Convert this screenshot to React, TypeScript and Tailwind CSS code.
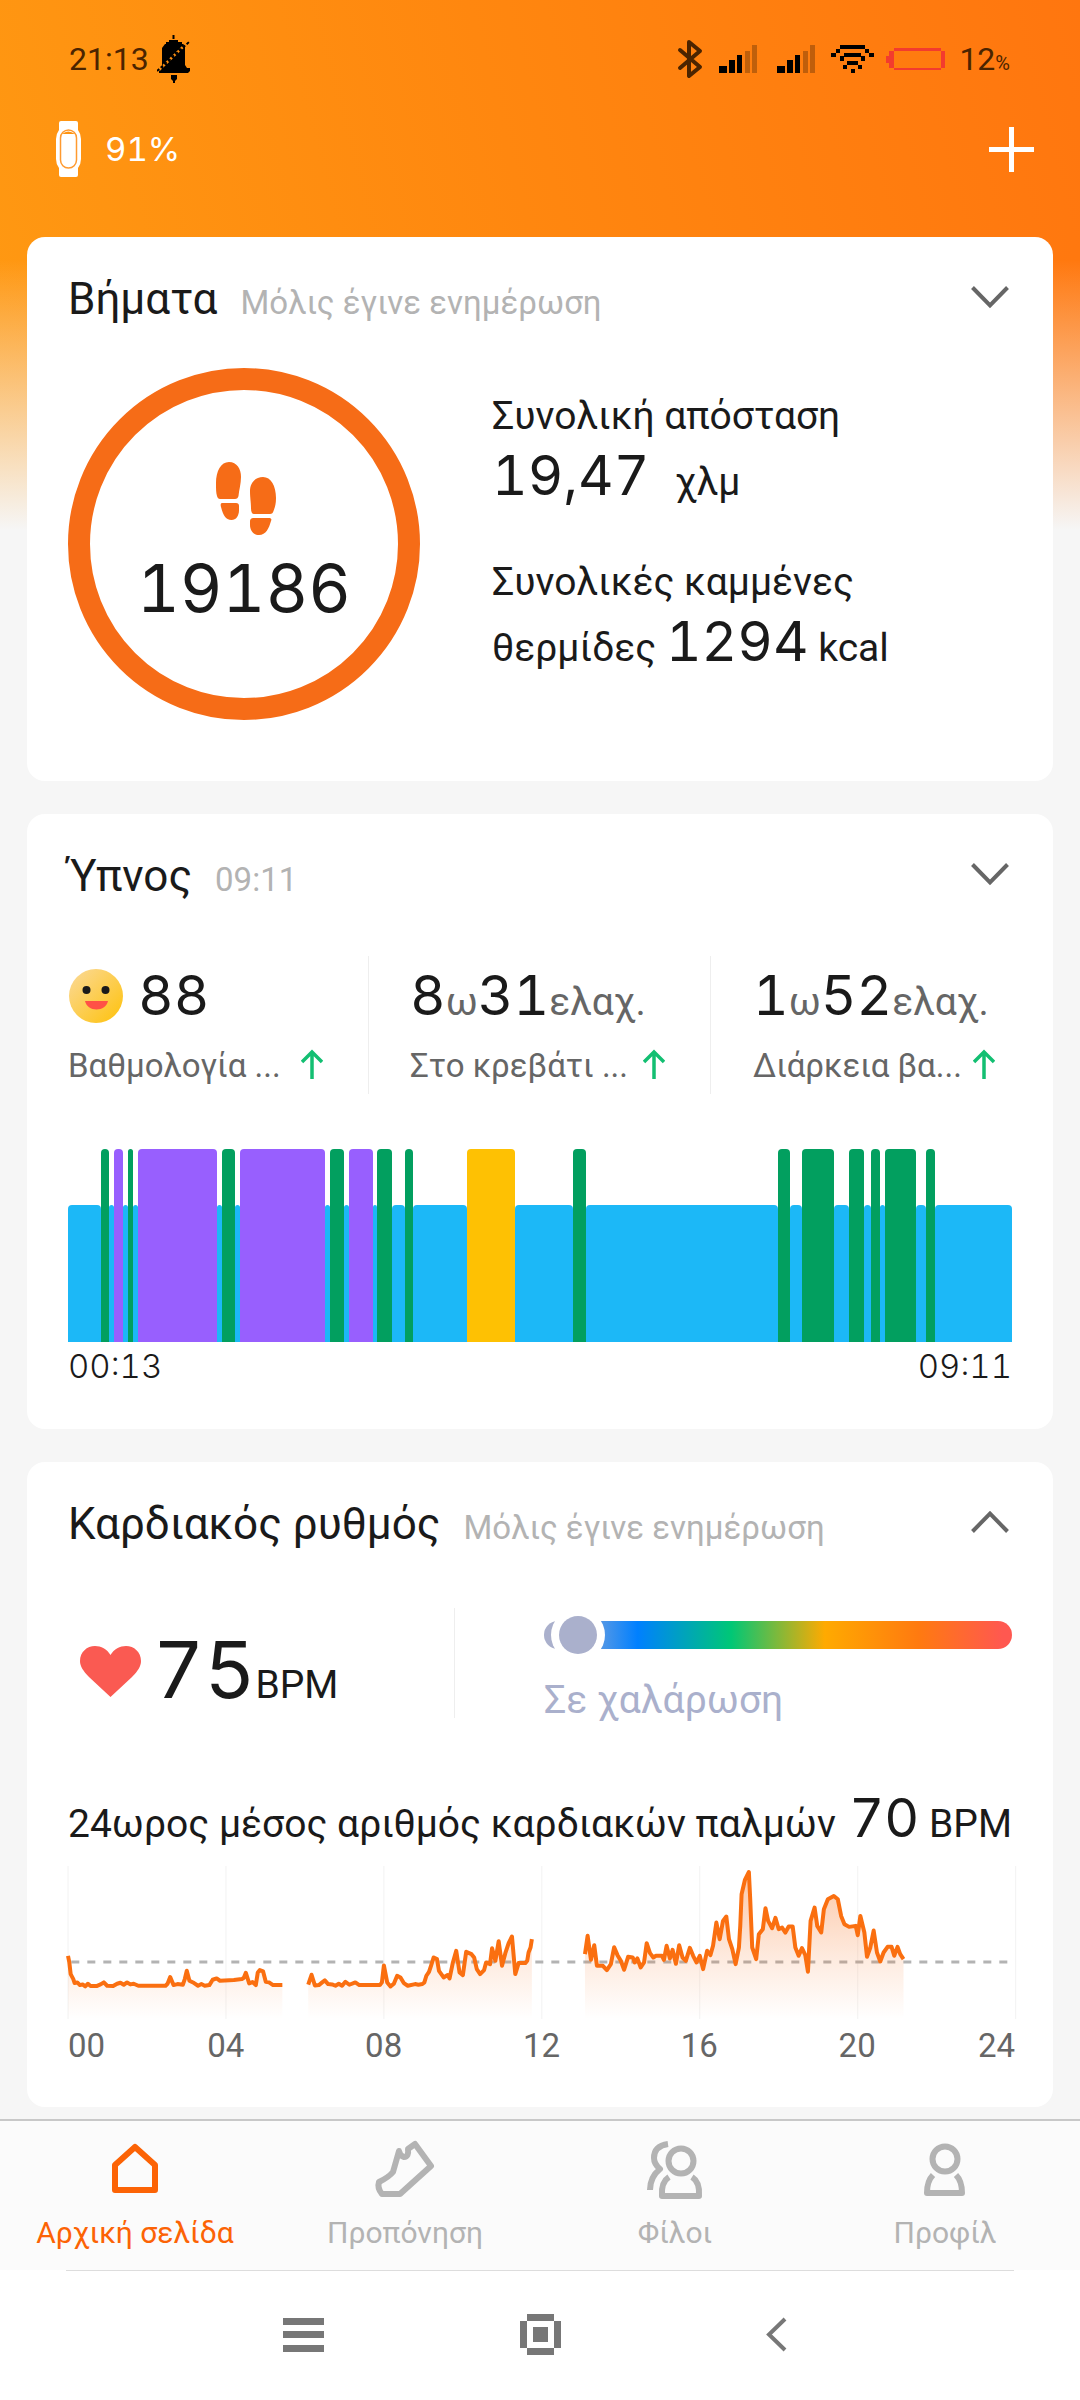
import React from 'react';

type Stage = 'light' | 'deep' | 'rem' | 'awake';

const stageClass: Record<Stage, string> = {
	light: 'h-[137px] bg-[#1cb8f7]',
	deep: 'h-full bg-[#985ffe]',
	rem: 'h-full bg-[#029f5f]',
	awake: 'h-full bg-[#fec103]',
};

const sleepStages: [Stage, number][] = [
	['light', 33], ['rem', 8], ['light', 5], ['deep', 9], ['light', 5], ['rem', 5], ['light', 5],
	['deep', 79], ['light', 5], ['rem', 13], ['light', 5], ['deep', 86], ['light', 5], ['rem', 14],
	['light', 5], ['deep', 24], ['light', 4], ['rem', 15], ['light', 13], ['rem', 8], ['light', 54],
	['awake', 48], ['light', 58], ['rem', 13], ['light', 193], ['rem', 12], ['light', 12], ['rem', 32],
	['light', 15], ['rem', 15], ['light', 7], ['rem', 9], ['light', 5], ['rem', 31], ['light', 10],
	['rem', 9], ['light', 77],
];

const sleepStats = [
	{ parts: [['88', '']], label: 'Βαθμολογία ...', face: true, className: 'pr-[45px]' },
	{ parts: [['8', 'ω'], ['31', 'ελαχ.']], label: 'Στο κρεβάτι ...', face: false, className: 'border-l border-[#eeeeee] pl-[41px] pr-[45px]' },
	{ parts: [['1', 'ω'], ['52', 'ελαχ.']], label: 'Διάρκεια βα...', face: false, className: 'border-l border-[#eeeeee] pl-[42px] pr-[17px]' },
];

// Recorded stretches of the day, as points in the chart's own 1427 x 460 space
const heartRuns = [
	'0,270 2,290 4,325 8,340 10,352 14,350 18,358 22,356 26,362 30,354 34,361 43,361 49,356 54,350 59,360 68,361 74,354 79,351 84,357 89,350 94,356 99,354 106,360 147,360 150,354 154,334 159,358 165,355 173,357 176,340 179,315 183,345 190,352 196,360 201,355 206,360 213,358 218,342 224,338 229,345 250,343 262,340 265,336 268,321 273,353 278,349 283,358 286,320 289,313 294,317 298,348 303,350 309,358 323,358',
	'362,357 364,345 367,327 372,359 378,358 383,350 387,344 392,355 398,356 403,360 408,354 413,360 418,348 424,357 433,350 439,358 470,358 473,350 476,299 481,350 486,362 491,354 496,330 501,335 506,352 512,360 523,355 528,357 534,355 537,350 540,330 544,318 547,300 551,275 556,280 559,315 566,335 572,328 575,338 580,290 585,255 590,320 595,328 600,258 608,265 612,275 616,310 621,325 627,313 630,290 636,295 639,247 644,285 649,226 654,300 659,262 664,232 669,212 674,325 679,292 689,292 692,285 694,260 697,245 699,220',
	'779,265 783,210 788,282 793,238 797,300 806,300 812,313 818,295 823,244 828,268 833,285 838,312 844,273 851,275 854,290 858,278 863,305 868,290 872,232 877,262 882,275 886,270 895,270 898,282 902,240 907,278 911,252 916,294 921,238 926,275 931,285 937,246 942,270 947,290 952,270 957,310 963,255 968,268 972,240 977,170 982,220 987,165 992,152 996,220 1001,250 1006,295 1011,245 1013,180 1015,85 1020,42 1026,18 1028,100 1031,245 1037,280 1041,205 1047,190 1051,127 1055,165 1061,187 1066,156 1071,190 1076,185 1081,200 1086,182 1092,182 1096,245 1101,270 1106,247 1111,268 1115,318 1119,165 1125,125 1129,180 1135,200 1139,130 1145,100 1154,90 1160,100 1165,150 1170,175 1177,183 1187,180 1190,208 1194,150 1200,200 1204,273 1209,245 1214,194 1219,260 1224,287 1229,260 1235,243 1241,243 1245,270 1250,243 1254,265 1259,280',
];

const hours = ['04', '08', '12', '16', '20'];

function areaPath(points: string) {
	const list = points.split(' ');
	const first = list[0].split(',')[0];
	const last = list[list.length - 1].split(',')[0];
	return `M${first},460 L${list.join(' L')} L${last},460 Z`;
}

const Num: React.FC<{ className?: string; children: React.ReactNode }> = ({ className = '', children }) => (
	<span className={`font-['Inter',sans-serif] leading-none tabular-nums ${className}`}>{children}</span>
);

const Card: React.FC<{ title: string; note: string; open?: boolean; className?: string; children: React.ReactNode }> = ({
	title,
	note,
	open = false,
	className = '',
	children,
}) => (
	<section className={`rounded-[18px] bg-white px-[41px] pt-9 ${className}`}>
		<div className="flex items-center justify-between">
			<div className="flex items-baseline gap-[23px]">
				<h2 className="text-[44px] leading-[52px]">{title}</h2>
				<span className="text-[33px] leading-[40px] text-[#b3b3b3]">{note}</span>
			</div>
			<button type="button" aria-label={title} aria-expanded={open} className="pb-1 pr-[3px]">
				<svg width="38" height="24" viewBox="0 0 38 24" fill="none" stroke="#666666" strokeWidth="4" className={open ? 'rotate-180' : ''}>
					<path d="M1.500 2.500 L19 20.500 L36.500 2.500" />
				</svg>
			</button>
		</div>
		{children}
	</section>
);

const Signal: React.FC = () => (
	<svg width="38" height="28" viewBox="0 0 38 28" fill="#000000">
		<path d="M0 21h8v7H0zM10 15h6v13h-6zM18 10h5v18h-5z" />
		<path opacity=".25" d="M26 6h5v22h-5zM33 0h5v28h-5z" />
	</svg>
);

const StatusBar: React.FC = () => (
	<div className="flex h-[118px] items-center justify-between pl-[69px] pr-[70px] text-[32px] text-[#4b2400]">
		<div className="flex items-center gap-2">
			<span>21:13</span>
			<svg width="33" height="48" viewBox="0 0 33 48" fill="#000000">
				<path d="M15.500 0h2v4h-2zM12 5h9v2h4v2h3v21l2 3h3v3l-2 2H2v-3l3-2V13l3-4h1V7h3z" />
				<path d="M14 40h6v4l-2 2v2h-2v-2l-2-2z" />
				<path d="M2 35 30 8" stroke="#ff8f10" strokeWidth="2.500" strokeDasharray="3 2" />
				<path d="M0 36 32 7" stroke="#000000" strokeWidth="2" strokeDasharray="3 2" />
			</svg>
		</div>
		<div className="flex items-center">
			<svg width="26" height="40" viewBox="0 0 26 40" fill="none" stroke="#4b2400" strokeWidth="4" strokeLinejoin="round" strokeLinecap="round">
				<path d="M3 11 L23 28 L12 37 V3 L23 12 L3 29" />
			</svg>
			<span className="ml-4"><Signal /></span>
			<span className="ml-5"><Signal /></span>
			<svg width="43" height="28" viewBox="0 0 43 28" fill="#000000" className="ml-4">
				<path d="M9 0h25v4H9zM5 4h4v4H5zM34 4h4v4h-4zM0 8h5v4H0zM38 8h5v4h-5z" />
				<path d="M13 8h17v4H13zM9 11h4v5H9zM30 11h4v5h-4z" />
				<path d="M16 16h11v4H16zM12 20h4v4h-4zM27 20h4v4h-4zM20 24h4v4h-4z" />
			</svg>
			<svg width="59" height="23" viewBox="0 0 59 23" fill="#f33b2e" className="ml-3">
				<path d="M8 0h47v3H8zM8 20h47v2H8zM3 3h5v17H3zM0 8h3v7H0zM55 3h4v17h-4z" />
			</svg>
			<span className="ml-[14px] flex items-baseline">
				12<span className="text-[20px]">%</span>
			</span>
		</div>
	</div>
);

const StepsCard: React.FC = () => (
	<Card title="Βήματα" note="Μόλις έγινε ενημέρωση" className="pb-[61px]">
		<div className="mt-[43px] flex gap-[72px]">
			<div className="flex size-[352px] shrink-0 flex-col items-center rounded-full border-[22px] border-[#f66c17] pt-[71px]">
				<svg width="60" height="76" viewBox="0 0 60 76" fill="#f66c17" className="ml-1">
					<path d="M13 1C5 1 0 10 0 22c0 6 0 10 1 13 .5 2 1.500 3 3 3h15c2 0 3-1 3.500-3 .5-6 2.500-12 2.500-19C25 8 21 1 13 1z" />
					<path d="M6 42h14c2 0 3 1 3 3v4c0 6-3 10-7.500 10C9 59 7 53 5 46c-.5-2-.5-4 1-4z" />
					<path d="M47 16c-8 0-13 6-13 14 0 7 1 11 1 17 0 4 1 6 3 6h16c2 0 3-1 3.500-3C59 46 60 43 60 37c0-12-5-21-13-21z" />
					<path d="M38 57h15c2 0 3 1 2 3-2 7-5 14-12 14-5 0-9-4-9-10v-3c0-3 1-4 4-4z" />
				</svg>
				<Num className="mt-[18px] text-[66px]">19186</Num>
			</div>
			<div className="flex flex-col gap-[36px] pt-4 text-[39px] leading-[64px]">
				<p>
					Συνολική απόσταση
					<br />
					<Num className="mr-4 text-[55px]">19,47</Num> χλμ
				</p>
				<p>
					Συνολικές καμμένες
					<br />
					θερμίδες <Num className="text-[55px]">1294</Num> kcal
				</p>
			</div>
		</div>
	</Card>
);

const SleepCard: React.FC = () => (
	<Card title="Ύπνος" note="09:11" className="pb-[43px]">
		<div className="mt-[54px] grid h-[138px] grid-cols-[300fr_342fr_302fr]">
			{sleepStats.map((stat) => (
				<div key={stat.label} className={stat.className}>
					<div className="flex h-20 items-center whitespace-nowrap">
						{stat.face && (
							<svg width="56" height="56" viewBox="0 0 56 56" className="mr-[14px]">
								<defs>
									<linearGradient id="face" x1="0" y1="0" x2="1" y2="1">
										<stop offset="0.150" stopColor="#fbd685" />
										<stop offset="0.900" stopColor="#fec418" />
									</linearGradient>
								</defs>
								<circle cx="28" cy="28" r="27" fill="url(#face)" />
								<circle cx="18.500" cy="22" r="4" fill="#1a1a1a" />
								<circle cx="37.500" cy="22" r="4" fill="#1a1a1a" />
								<path d="M17 33h23c-1 5-6 8.500-11.500 8.500S18 38 17 33z" fill="#ff5146" />
							</svg>
						)}
						<div className="pt-3 text-[39px] leading-[80px] text-[#666666]">
							{stat.parts.map(([value, unit]) => (
								<React.Fragment key={value}>
									<Num className="text-[55px] text-[#1a1a1a]">{value}</Num>
									{unit}
								</React.Fragment>
							))}
						</div>
					</div>
					<div className="mt-[10px] flex items-center justify-between whitespace-nowrap text-[33px] leading-[40px] text-[#666666]">
						{stat.label}
						<svg width="22" height="30" viewBox="0 0 22 30" fill="none" stroke="#13bf72" strokeWidth="3.500" className="mb-1">
							<path d="M11 30V3M1 13 11 3l10 10" />
						</svg>
					</div>
				</div>
			))}
		</div>
		<div className="mt-[55px] flex h-[193px] items-end">
			{sleepStages.map(([stage, minutes], index) => (
				<div key={index} className={`basis-0 rounded-t-[4px] ${stageClass[stage]}`} style={{ flexGrow: minutes }} />
			))}
		</div>
		<div className="mt-1 flex h-10 items-center justify-between text-[33px]">
			<Num className="font-light">00:13</Num>
			<Num className="font-light">09:11</Num>
		</div>
	</Card>
);

const HeartChart: React.FC = () => (
	<svg viewBox="0 0 1427 460" preserveAspectRatio="none" className="block h-[153px] w-full overflow-visible" fill="none">
		<defs>
			<linearGradient id="heart-fill" gradientUnits="userSpaceOnUse" x1="0" y1="0" x2="0" y2="460">
				<stop offset="0" stopColor="#f66c17" stopOpacity="0.4" />
				<stop offset="0.600" stopColor="#f66c17" stopOpacity="0.140" />
				<stop offset="1" stopColor="#f66c17" stopOpacity="0" />
			</linearGradient>
		</defs>
		{[0, 1, 2, 3, 4, 5, 6].map((i) => (
			<path key={i} d={`M${i * 238},0 V460`} stroke="#f2f2f2" strokeWidth="1" vectorEffect="non-scaling-stroke" />
		))}
		<path d="M5,289 H1422" stroke="#b3b3b3" strokeWidth="3" strokeDasharray="8 8" vectorEffect="non-scaling-stroke" />
		{heartRuns.map((run) => (
			<g key={run}>
				<path d={areaPath(run)} fill="url(#heart-fill)" />
				<polyline points={run} stroke="#fa6f10" strokeWidth="4" strokeLinejoin="round" vectorEffect="non-scaling-stroke" />
			</g>
		))}
	</svg>
);

const HeartCard: React.FC = () => (
	<Card title="Καρδιακός ρυθμός" note="Μόλις έγινε ενημέρωση" open className="pb-[41px]">
		<div className="mt-[58px] flex h-[110px]">
			<div className="flex w-[41%] items-baseline border-r border-[#eeeeee] pl-3 pt-[22px]">
				<svg width="61" height="52" viewBox="0 0 61 52" fill="#fa5a52" className="mb-[10px]">
					<path d="M30.500 51 9 31C3 25 0 20 0 15 0 6 7 0 15 0c6 0 12 3 15.500 9C34 3 40 0 46 0c8 0 15 6 15 15 0 5-3 10-9 16z" />
				</svg>
				<Num className="ml-3 text-[79px]">75</Num>
				<span className="text-[39px] leading-none">BPM</span>
			</div>
			<div className="flex-1 pl-[89px] pt-[13px]">
				<div className="relative h-7 rounded-full bg-[linear-gradient(to_right,#aab0cc_0%,#aab0cc_4%,#0080ff_20%,#00c776_40%,#ffaa00_60%,#ff7a10_80%,#ff5850_98%)]">
					<span className="absolute -top-[13px] left-[7px] size-[54px] rounded-full bg-white p-2">
						<span className="block size-full rounded-full bg-[#aab0cc]" />
					</span>
				</div>
				<p className="mt-[27px] text-[39px] leading-[48px] text-[#aab0cc]">Σε χαλάρωση</p>
			</div>
		</div>
		<p className="mt-[73px] flex h-16 items-baseline justify-between whitespace-nowrap text-[39px] leading-[64px]">
			<span>24ωρος μέσος αριθμός καρδιακών παλμών</span>
			<span>
				<Num className="text-[54px]">70</Num> BPM
			</span>
		</p>
		<div className="-mr-[3px] mt-[11px]">
			<HeartChart />
			<div className="mt-[7px] grid grid-cols-12 text-[33px] leading-[40px] text-[#666666]">
				<span>00</span>
				{hours.map((hour) => (
					<span key={hour} className="col-span-2 text-center">{hour}</span>
				))}
				<span className="text-right">24</span>
			</div>
		</div>
	</Card>
);

const tabs = [
	{ label: 'Αρχική σελίδα', icon: <path d="M10 51V26L30 8l20 18v25z" /> },
	{ label: 'Προπόνηση', icon: <path d="M24 12 18 33Q14 38 4 43q-2 6 3 12h18L56 27 40 5l-7 5q1 8-4 8-4-1-5-6z" /> },
	{
		label: 'Φίλοι',
		icon: (
			<>
				<circle cx="36" cy="22" r="12.500" />
				<path d="M24 38q-8 5-7 19h37q1-14-7-19" />
				<path d="M23 5Q9 7 9 19q0 6 6 11Q5 38 5 51" />
			</>
		),
	},
	{
		label: 'Προφίλ',
		icon: (
			<>
				<circle cx="30" cy="20" r="12.500" />
				<path d="M18 36q-6 6-6 18h35q0-12-6-18" />
			</>
		),
	},
];

const TabBar: React.FC = () => (
	<nav className="grid h-[151px] grid-cols-4 border-t-2 border-[#c8c8c8] bg-[#fbfbfb]">
		{tabs.map((tab, index) => (
			<a
				key={tab.label}
				href="#"
				aria-current={index === 0 ? 'page' : undefined}
				className={`flex flex-col items-center pt-[18px] ${index === 0 ? 'text-[#fc6305]' : 'text-[#b3b3b3]'}`}
			>
				<svg width="60" height="60" viewBox="0 0 60 60" fill="none" stroke="currentColor" strokeWidth="6" strokeLinejoin="round" className="overflow-visible">
					{tab.icon}
				</svg>
				<span className="mt-[14px] text-[30px] leading-[40px]">{tab.label}</span>
			</a>
		))}
	</nav>
);

const SystemBar: React.FC = () => (
	<div className="bg-white px-[66px]">
		<div className="flex h-[130px] justify-center gap-[196px] border-t border-[#dddddd] pt-[43px]">
			<button type="button" aria-label="Πρόσφατα" className="size-[41px]">
				<svg width="41" height="41" viewBox="0 0 41 41" fill="#777777">
					<path d="M0 4h41v7H0zM0 17h41v7H0zM0 31h41v7H0z" />
				</svg>
			</button>
			<button type="button" aria-label="Αρχική οθόνη" className="size-[41px]">
				<svg width="41" height="41" viewBox="0 0 41 41" fill="#777777">
					<path d="M7 0h27v7H7zM7 34h27v7H7zM0 7h7v27H0zM34 7h7v27h-7zM13 13h15v15H13z" />
				</svg>
			</button>
			<button type="button" aria-label="Πίσω" className="size-[41px]">
				<svg width="41" height="41" viewBox="0 0 41 41" fill="none" stroke="#777777" strokeWidth="4">
					<path d="M28 5 12 20.500 28 36" />
				</svg>
			</button>
		</div>
	</div>
);

export default function App() {
	return (
		<div className="min-h-screen bg-[#f6f6f6] bg-[linear-gradient(to_bottom,transparent_260px,#f6f6f6_530px),linear-gradient(75deg,#ff9a12,#ff870f_50%,#ff760f)] bg-[length:100%_100%,100%_540px] bg-no-repeat font-['Roboto',sans-serif] text-[#1a1a1a]">
			<StatusBar />
			<header className="flex h-[62px] items-center justify-between pl-14 pr-[46px] text-white">
				<div className="flex items-center gap-6">
					<svg width="25" height="56" viewBox="0 0 25 56">
						<path fill="currentColor" d="M3 2q0-2 2-2h15q2 0 2 2v7q3 4 3 9v20q0 5-3 9v7q0 2-2 2H5q-2 0-2-2v-7q-3-4-3-9V18q0-5 3-9z" />
						<rect x="4.500" y="9" width="16" height="38" rx="8" fill="none" stroke="#ff9a30" strokeWidth="1.500" />
						<path d="M6 13q6-5 13 0z" fill="#ff9410" />
					</svg>
					<Num className="text-[33px]">91%</Num>
				</div>
				<button type="button" aria-label="Προσθήκη">
					<svg width="45" height="45" viewBox="0 0 45 45" stroke="currentColor" strokeWidth="5">
						<path d="M22.500 0v45M0 22.500h45" />
					</svg>
				</button>
			</header>
			<main className="flex flex-col gap-[33px] px-[27px] pb-3 pt-[57px]">
				<StepsCard />
				<SleepCard />
				<HeartCard />
			</main>
			<TabBar />
			<SystemBar />
		</div>
	);
}
